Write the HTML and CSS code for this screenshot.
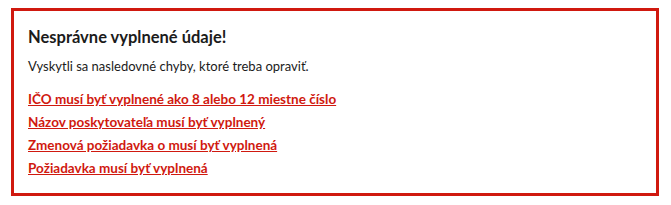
FILE: index.html
```html
<!doctype html>
<html lang="sk">
  <head>
    <meta charset="utf-8" />
    <title>Chyby formulára</title>
    <link rel="stylesheet" href="styles.css">
  </head>
  <body>
    <div class="error-summary">
      <h2 class="error-summary-title">Nesprávne vyplnené údaje!</h2>
      <p class="error-summary-body">Vyskytli sa nasledovné chyby, ktoré treba opraviť.</p>
      <ul class="error-summary-list">
        <li><a href="#ico">IČO musí byť vyplnené ako 8 alebo 12 miestne číslo</a></li>
        <li><a href="#nazov">Názov poskytovateľa musí byť vyplnený</a></li>
        <li><a href="#zmena">Zmenová požiadavka o musí byť vyplnená</a></li>
        <li><a href="#poziadavka">Požiadavka musí byť vyplnená</a></li>
      </ul>
    </div>
  </body>
</html>
```

FILE: styles.css
```css
* {
  box-sizing: border-box;
}

body {
  margin: 0;
  padding: 8px 12px 9px 11px;
  font-family: Lato, "Open Sans", Arial, sans-serif;
  color: #1b1b1b;
  background: #fff;
}

.error-summary {
  height: 188px;
  border: 3px solid #d0190f;
  padding: 15px 14px 14px 14px;
}

.error-summary-title {
  margin: 0;
  font-size: 16.5px;
  font-weight: 700;
  line-height: 22px;
}

.error-summary-body {
  margin: 8px 0 0 0;
  font-size: 13px;
  line-height: 20px;
}

.error-summary-list {
  list-style: none;
  margin: 12px 0 0 0;
  padding: 0;
}

.error-summary-list li {
  font-size: 13.5px;
  line-height: 23px;
}

.error-summary-list a {
  color: #d0190f;
  font-weight: 700;
  text-decoration: underline;
}
```
